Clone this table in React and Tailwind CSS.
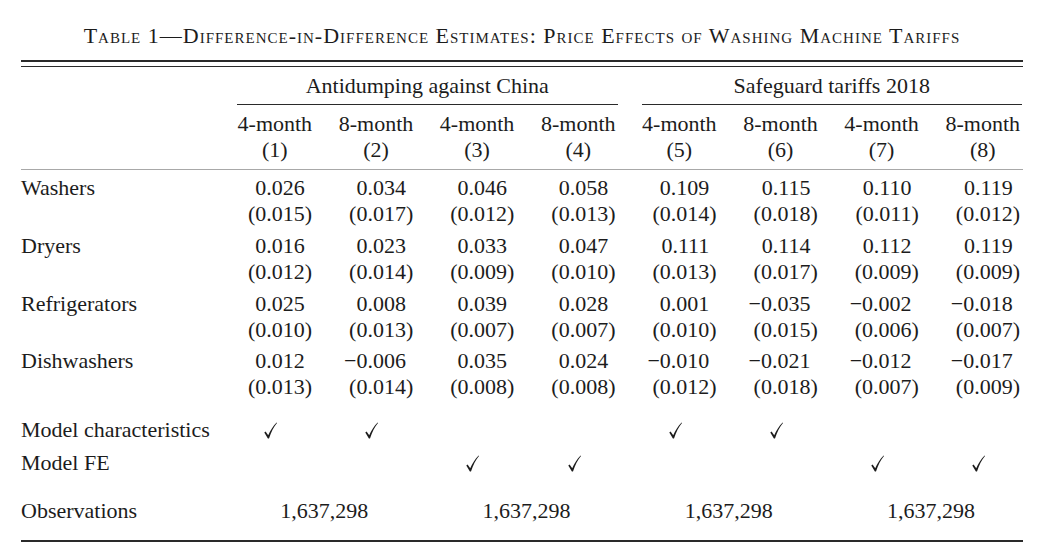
import React from 'react';

// Table 1 — DiD estimates, recreated as a plain grid
const COLS = ['4-month', '8-month', '4-month', '8-month', '4-month', '8-month', '4-month', '8-month'];

const ROWS = [
  {
    label: 'Washers',
    coef: ['0.026', '0.034', '0.046', '0.058', '0.109', '0.115', '0.110', '0.119'],
    se: ['0.015', '0.017', '0.012', '0.013', '0.014', '0.018', '0.011', '0.012'],
  },
  {
    label: 'Dryers',
    coef: ['0.016', '0.023', '0.033', '0.047', '0.111', '0.114', '0.112', '0.119'],
    se: ['0.012', '0.014', '0.009', '0.010', '0.013', '0.017', '0.009', '0.009'],
  },
  {
    label: 'Refrigerators',
    coef: ['0.025', '0.008', '0.039', '0.028', '0.001', '\u22120.035', '\u22120.002', '\u22120.018'],
    se: ['0.010', '0.013', '0.007', '0.007', '0.010', '0.015', '0.006', '0.007'],
  },
  {
    label: 'Dishwashers',
    coef: ['0.012', '\u22120.006', '0.035', '0.024', '\u22120.010', '\u22120.021', '\u22120.012', '\u22120.017'],
    se: ['0.013', '0.014', '0.008', '0.008', '0.012', '0.018', '0.007', '0.009'],
  },
];

const CHAR = [true, true, false, false, true, true, false, false];
const FE = [false, false, true, true, false, false, true, true];

const GRID = 'grid grid-cols-[192px_repeat(8,101.14px)]';

function Check() {
  return (
    <svg width="13" height="17" viewBox="0 0 13 17" className="block">
      <path
        d="M0.3 10.6 L1.6 9.6 L4.2 13.2 C6.3 8.4 9.1 3.9 12.6 0.4 L13 0.9 C9.9 4.6 7.2 9.6 5 16.6 L3.9 16.6 Z"
        fill="#1c1c1c"
      />
    </svg>
  );
}

function Rule({ className = '' }) {
  return <div className={`w-full bg-[#2a2a2a] ${className}`} />;
}

export default function App() {
  return (
    <div
      className="w-[1055px] h-[551px] bg-white text-[#1c1c1c] overflow-hidden"
      style={{ fontFamily: '"Liberation Serif", "Times New Roman", serif' }}
    >
      <div className="ml-[21px] w-[1002px] pt-[24px]">
        {/* title */}
        <div className="text-center text-[22px] leading-[24px] [font-variant:small-caps] tracking-[1px] whitespace-nowrap">
          Table 1—Difference-in-Difference Estimates: Price Effects of Washing Machine Tariffs
        </div>

        {/* double top rule */}
        <Rule className="mt-[12px] h-[1.5px]" />
        <Rule className="mt-[4px] h-[1.5px]" />

        {/* group headers */}
        <div className={`${GRID} mt-[6px] text-[22px] leading-[26px]`}>
          <div />
          <div className="col-span-4 flex flex-col">
            <div className="pl-[24px] text-center">Antidumping against China</div>
            <div className="ml-[24px] mt-[5px] h-[1.3px] bg-[#2a2a2a]" />
          </div>
          <div className="col-span-4 flex flex-col">
            <div className="pl-[24px] text-center">Safeguard tariffs 2018</div>
            <div className="ml-[24px] mt-[5px] h-[1.3px] bg-[#2a2a2a]" />
          </div>
        </div>

        {/* column headers */}
        <div className={`${GRID} mt-[6px] text-[22px] leading-[26px]`}>
          <div />
          {COLS.map((c, i) => (
            <div key={i} className="flex justify-end pr-[2px]">
              <div className="text-center">
                <div>{c}</div>
                <div>({i + 1})</div>
              </div>
            </div>
          ))}
        </div>

        <div className="mt-[6px] h-px w-full bg-[#a8a8a8]" />

        {/* estimates */}
        <div className="mt-[5px] flex flex-col gap-[5.7px] text-[22px] leading-[26px]">
          {ROWS.map((r) => (
            <div key={r.label} className={GRID}>
              <div>{r.label}</div>
              {r.coef.map((v, i) => (
                <div key={i} className="pr-[2px] text-right whitespace-nowrap">
                  <div>
                    {v}
                    <span className="invisible">)</span>
                  </div>
                  <div>({r.se[i]})</div>
                </div>
              ))}
            </div>
          ))}
        </div>

        {/* controls */}
        <div className={`${GRID} mt-[17px] h-[26px] items-center text-[22px] leading-[26px]`}>
          <div className="whitespace-nowrap">Model characteristics</div>
          {CHAR.map((on, i) => (
            <div key={i} className="flex justify-end pr-[37px]">
              {on && <Check />}
            </div>
          ))}
        </div>
        <div className={`${GRID} mt-[7px] h-[26px] items-center text-[22px] leading-[26px]`}>
          <div>Model FE</div>
          {FE.map((on, i) => (
            <div key={i} className="flex justify-end pr-[37px]">
              {on && <Check />}
            </div>
          ))}
        </div>

        {/* observations */}
        <div className={`${GRID} mt-[22px] text-[22px] leading-[26px]`}>
          <div>Observations</div>
          {[0, 1, 2, 3].map((k) => (
            <div key={k} className="col-span-2 pl-[20px] text-center">
              1,637,298
            </div>
          ))}
        </div>

        <Rule className="mt-[16px] h-[1.5px]" />
      </div>
    </div>
  );
}
